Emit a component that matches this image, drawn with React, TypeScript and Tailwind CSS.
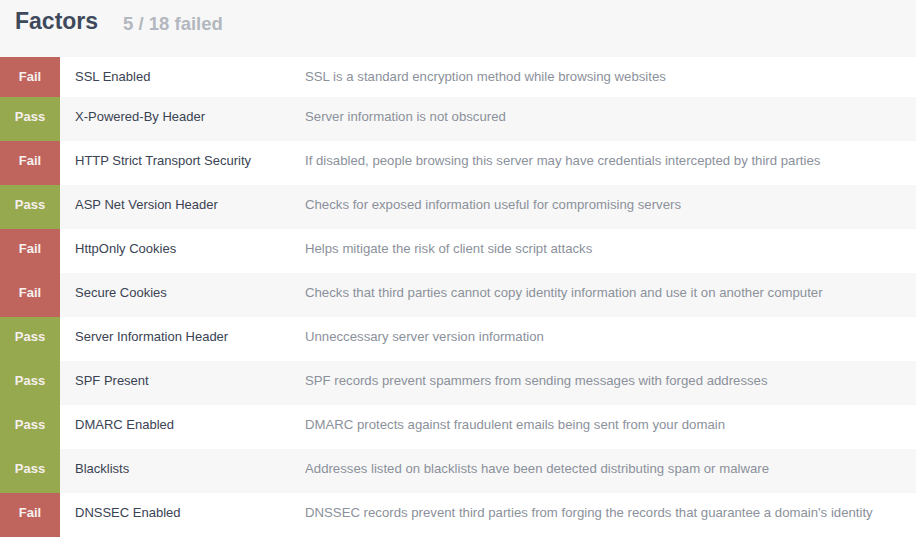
const factors = [
  { pass: false, name: "SSL Enabled", desc: "SSL is a standard encryption method while browsing websites" },
  { pass: true, name: "X-Powered-By Header", desc: "Server information is not obscured" },
  { pass: false, name: "HTTP Strict Transport Security", desc: "If disabled, people browsing this server may have credentials intercepted by third parties" },
  { pass: true, name: "ASP Net Version Header", desc: "Checks for exposed information useful for compromising servers" },
  { pass: false, name: "HttpOnly Cookies", desc: "Helps mitigate the risk of client side script attacks" },
  { pass: false, name: "Secure Cookies", desc: "Checks that third parties cannot copy identity information and use it on another computer" },
  { pass: true, name: "Server Information Header", desc: "Unneccessary server version information" },
  { pass: true, name: "SPF Present", desc: "SPF records prevent spammers from sending messages with forged addresses" },
  { pass: true, name: "DMARC Enabled", desc: "DMARC protects against fraudulent emails being sent from your domain" },
  { pass: true, name: "Blacklists", desc: "Addresses listed on blacklists have been detected distributing spam or malware" },
  { pass: false, name: "DNSSEC Enabled", desc: "DNSSEC records prevent third parties from forging the records that guarantee a domain's identity" },
];

export default function App() {
  return (
    <div className="h-[537px] w-[916px] overflow-hidden bg-[#f7f7f7] font-['Liberation_Sans',Arial,sans-serif]">
      <div className="flex h-[57px] items-start gap-[25px] px-[15px] pt-[6px]">
        <h1 className="text-[23px] font-bold leading-[30px] text-[#3e4a5b]">Factors</h1>
        <span className="mt-[3px] text-[18.5px] font-bold leading-[30px] text-[#b3b7bf]">5 / 18 failed</span>
      </div>
      <div>
        {factors.map((f, i) => {
          const cell = `flex h-full items-center ${i === 0 ? "" : "pb-[4px]"}`;
          return (
            <div
              key={f.name}
              className={`flex text-[13px] ${i === 0 ? "h-[40px]" : "h-[44px]"} ${i % 2 === 0 ? "bg-white" : "bg-[#f7f7f7]"}`}
            >
              <div
                className={`${cell} w-[60px] shrink-0 justify-center font-bold text-[#f6f0ee] ${f.pass ? "bg-[#97a94f]" : "bg-[#c0655d]"}`}
              >
                {f.pass ? "Pass" : "Fail"}
              </div>
              <div className={`${cell} w-[230px] shrink-0 pl-[15px] text-[#3a4353]`}>{f.name}</div>
              <div className={`${cell} pl-[15px] text-[13.2px] text-[#8b919b]`}>{f.desc}</div>
            </div>
          );
        })}
      </div>
    </div>
  );
}
